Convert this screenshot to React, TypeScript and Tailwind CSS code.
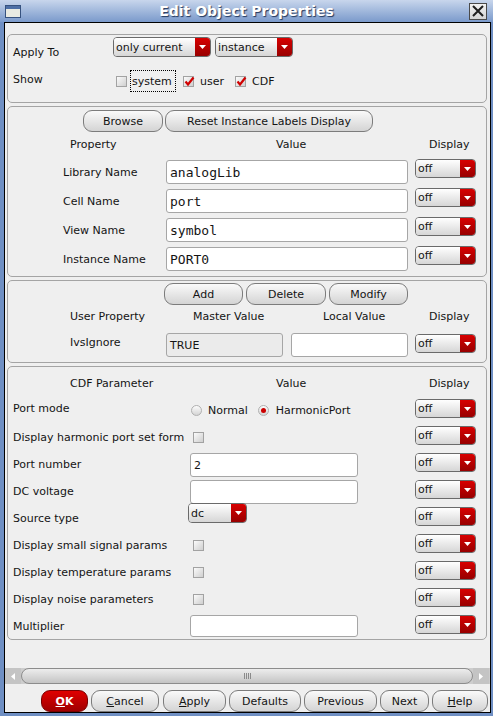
import React from 'react';

const Dropdown = ({ text, className }: { text: string; className: string }) => (
  <div className={`flex shrink-0 overflow-hidden rounded-[4px] border border-[#6a6a6a] ${className}`}>
    <div className="flex flex-1 items-center bg-linear-to-b from-white to-[#d6d6d6] pl-[2px] leading-[13px]">{text}</div>
    <div className="flex w-[15px] items-center justify-center bg-linear-to-b from-[#d80000] to-[#980000]">
      <svg width="7" height="4" viewBox="0 0 7 4">
        <path d="M0 0h7L3.5 4z" fill="#fff" />
      </svg>
    </div>
  </div>
);

const Btn = ({ children, className }: { children: React.ReactNode; className: string }) => (
  <div className={`flex h-[22px] shrink-0 items-center justify-center rounded-[9px] border border-[#7c7c7c] bg-linear-to-b from-[#fafafa] to-[#d4d4d4] leading-[13px] ${className}`}>
    {children}
  </div>
);

const Check = ({ on }: { on?: boolean }) => (
  <div className="relative h-[11px] w-[11px] shrink-0 border border-[#a2a2a2] bg-linear-to-br from-[#fbfbfb] to-[#cfcfcf]">
    {on && (
      <svg className="absolute left-[0px] top-[-1px]" width="11" height="11" viewBox="0 0 11 11">
        <path d="M1.5 5.5L4 8.5L9.5 1.5" stroke="#d00000" strokeWidth="2.2" fill="none" />
      </svg>
    )}
  </div>
);

const Radio = ({ on }: { on?: boolean }) => (
  <div className="flex h-[11px] w-[11px] shrink-0 items-center justify-center rounded-full border border-[#b0b0b0] bg-linear-to-b from-[#fcfcfc] to-[#d4d4d4]">
    {on && <div className="h-[5px] w-[5px] rounded-full bg-[#cc0000]" />}
  </div>
);

const Field = ({ text, className }: { text?: string; className: string }) => (
  <div className={`shrink-0 rounded-[3px] border border-[#a6a6a6] pl-[3px] pt-[5px] font-['DejaVu_Sans_Mono',monospace] text-[13px] leading-[14px] ${className}`}>
    {text}
  </div>
);

const props = [
  ['Library Name', 'analogLib'],
  ['Cell Name', 'port'],
  ['View Name', 'symbol'],
  ['Instance Name', 'PORT0'],
];

const Row = ({ label, first, children }: { label: string; first?: boolean; children?: React.ReactNode }) => (
  <div className="flex h-[27px] shrink-0 pl-[5px]">
    <div className={`w-[175px] shrink-0 whitespace-nowrap ${first ? 'mt-[3px]' : 'mt-[5px]'}`}>{label}</div>
    <div className="w-[227px] shrink-0">{children}</div>
    <Dropdown text="off" className="h-[19px] w-[61px]" />
  </div>
);

export default function App() {
  return (
    <div className="flex h-[716px] w-[493px] flex-col bg-[#6f8fc3] font-['DejaVu_Sans',sans-serif] text-[11px] leading-[13px] text-[#141414]">
      {/* title bar */}
      <div className="flex h-[22px] shrink-0 items-center bg-linear-to-b from-[#c8d6ec] to-[#7b9acb]">
        <div className="w-[24px] shrink-0 pl-[5px]">
          <div className="h-[13px] w-[16px] border border-[#36527f] bg-[#e8eae2]">
            <div className="h-[3px] bg-[#4d6fa6]" />
          </div>
        </div>
        <div className="flex-1 text-center text-[14px] font-bold leading-[17px] text-white [text-shadow:1px_1px_1px_#22385e]">
          Edit Object Properties
        </div>
        <div className="flex w-[24px] shrink-0 justify-start">
          <div className="flex h-[17px] w-[18px] items-center justify-center border border-[#4a4a4a] bg-linear-to-b from-[#f2f2f2] to-[#d4d4d4]">
            <svg width="12" height="12" viewBox="0 0 12 12">
              <path d="M1 1L11 11M11 1L1 11" stroke="#1e1e1e" strokeWidth="2" />
            </svg>
          </div>
        </div>
      </div>

      <div className="ml-[4px] flex h-[691px] w-[487px] flex-col border border-black bg-[#efefef]">
        {/* apply to / show */}
        <div className="ml-[2px] mt-[11px] h-[69px] w-[480px] shrink-0 rounded-[5px] border border-[#a4a4a4] pt-[2px]">
          <div className="flex h-[20px]">
            <div className="mt-[9px] w-[105px] shrink-0 pl-[5px]">Apply To</div>
            <Dropdown text="only current" className="h-[20px] w-[98px]" />
            <Dropdown text="instance" className="ml-[4px] h-[20px] w-[78px]" />
          </div>
          <div className="mt-[13px] flex h-[22px] items-center">
            <div className="w-[108px] shrink-0 self-start pl-[5px] pt-[3px]">Show</div>
            <Check />
            <div className="ml-[3px] flex h-[22px] w-[46px] items-center border border-dotted border-black pl-[1px]">system</div>
            <div className="ml-[7px]"><Check on /></div>
            <span className="ml-[6px]">user</span>
            <div className="ml-[11px]"><Check on /></div>
            <span className="ml-[6px]">CDF</span>
          </div>
        </div>

        {/* instance properties */}
        <div className="ml-[2px] mt-[3px] h-[171px] w-[480px] shrink-0 rounded-[5px] border border-[#a4a4a4] pt-[3px]">
          <div className="flex">
            <Btn className="ml-[75px] w-[80px]">Browse</Btn>
            <Btn className="ml-[2px] w-[208px]">Reset Instance Labels Display</Btn>
          </div>
          <div className="mt-[6px] flex">
            <span className="ml-[62px] w-[206px]">Property</span>
            <span className="w-[153px]">Value</span>
            <span>Display</span>
          </div>
          <div className="mt-[8px]">
            {props.map(([label, value]) => (
              <div key={label} className="flex h-[29px] pl-[55px]">
                <div className="mt-[7px] w-[103px] shrink-0">{label}</div>
                <Field text={value} className="mt-[1px] h-[24px] w-[242px] bg-white" />
                <div className="w-[7px] shrink-0" />
                <Dropdown text="off" className="h-[19px] w-[61px]" />
              </div>
            ))}
          </div>
        </div>

        {/* user properties */}
        <div className="ml-[2px] mt-[3px] h-[83px] w-[480px] shrink-0 rounded-[5px] border border-[#a4a4a4] pt-[2px]">
          <div className="flex">
            <Btn className="ml-[156px] w-[79px]">Add</Btn>
            <Btn className="ml-[3px] w-[80px]">Delete</Btn>
            <Btn className="ml-[3px] w-[79px]">Modify</Btn>
          </div>
          <div className="mt-[5px] flex">
            <span className="ml-[62px] w-[123px]">User Property</span>
            <span className="w-[130px]">Master Value</span>
            <span className="w-[106px]">Local Value</span>
            <span>Display</span>
          </div>
          <div className="mt-[10px] flex pl-[62px]">
            <div className="mt-[3px] w-[96px] shrink-0">IvsIgnore</div>
            <Field text="TRUE" className="h-[24px] w-[117px] bg-[#ebebeb] !font-['DejaVu_Sans',sans-serif] !text-[11px]" />
            <div className="w-[8px] shrink-0" />
            <Field className="h-[24px] w-[117px] bg-white" />
            <div className="w-[7px] shrink-0" />
            <Dropdown text="off" className="mt-[1px] h-[19px] w-[61px]" />
          </div>
        </div>

        {/* CDF parameters */}
        <div className="ml-[2px] mt-[3px] h-[274px] w-[480px] shrink-0 overflow-hidden rounded-[5px] border border-[#a4a4a4] pt-[10px]">
          <div className="flex">
            <span className="ml-[62px] w-[206px]">CDF Parameter</span>
            <span className="w-[153px]">Value</span>
            <span>Display</span>
          </div>
          <div className="mt-[9px]">
            <Row label="Port mode" first>
              <div className="flex h-[23px] items-center pl-[3px]">
                <Radio />
                <span className="ml-[6px]">Normal</span>
                <div className="ml-[10px]"><Radio on /></div>
                <span className="ml-[7px]">HarmonicPort</span>
              </div>
            </Row>
            <Row label="Display harmonic port set form">
              <div className="ml-[5px] mt-[6px]"><Check /></div>
            </Row>
            <Row label="Port number">
              <Field text="2" className="ml-[2px] h-[24px] w-[168px] bg-white !font-['DejaVu_Sans',sans-serif] !text-[11px]" />
            </Row>
            <Row label="DC voltage">
              <Field className="ml-[2px] h-[24px] w-[168px] bg-white" />
            </Row>
            <Row label="Source type">
              <Dropdown text="dc" className="-mt-[4px] h-[20px] w-[59px]" />
            </Row>
            <Row label="Display small signal params">
              <div className="ml-[5px] mt-[6px]"><Check /></div>
            </Row>
            <Row label="Display temperature params">
              <div className="ml-[5px] mt-[6px]"><Check /></div>
            </Row>
            <Row label="Display noise parameters">
              <div className="ml-[5px] mt-[6px]"><Check /></div>
            </Row>
            <Row label="Multiplier">
              <Field className="ml-[2px] h-[22px] w-[168px] bg-white" />
            </Row>
          </div>
        </div>

        {/* scrollbar */}
        <div className="mt-[28px] flex h-[16px] shrink-0 bg-[#cdcdcd]">
          <div className="flex w-[16px] items-center justify-center bg-[#c4c4c4]">
            <svg width="4" height="7" viewBox="0 0 4 7"><path d="M4 0v7L0 3.5z" fill="#fff" /></svg>
          </div>
          <div className="flex w-[452px] items-center justify-center rounded-full border border-[#8c8c8c] bg-linear-to-b from-[#ededed] to-[#c4c4c4]">
            <div className="flex gap-[1px]">
              <div className="h-[6px] w-[1px] bg-[#8a8a8a]" />
              <div className="h-[6px] w-[1px] bg-[#8a8a8a]" />
              <div className="h-[6px] w-[1px] bg-[#8a8a8a]" />
              <div className="h-[6px] w-[1px] bg-[#8a8a8a]" />
            </div>
          </div>
          <div className="flex w-[16px] items-center justify-center bg-[#c4c4c4]">
            <svg width="4" height="7" viewBox="0 0 4 7"><path d="M0 0v7L4 3.5z" fill="#fff" /></svg>
          </div>
        </div>

        {/* bottom buttons */}
        <div className="mt-[6px] flex">
          <div className="ml-[36px] flex h-[22px] w-[47px] items-center justify-center rounded-[9px] border border-[#7a0000] bg-linear-to-b from-[#e00000] to-[#a00000] font-bold text-white">
            <span><span className="underline">O</span>K</span>
          </div>
          <Btn className="ml-[3px] w-[68px]"><span><span className="underline">C</span>ancel</span></Btn>
          <Btn className="ml-[4px] w-[63px]"><span><span className="underline">A</span>pply</span></Btn>
          <Btn className="ml-[3px] w-[72px]">Defaults</Btn>
          <Btn className="ml-[3px] w-[73px]">Previous</Btn>
          <Btn className="ml-[3px] w-[49px]">Next</Btn>
          <Btn className="ml-[3px] w-[56px]"><span><span className="underline">H</span>elp</span></Btn>
        </div>
      </div>
    </div>
  );
}
